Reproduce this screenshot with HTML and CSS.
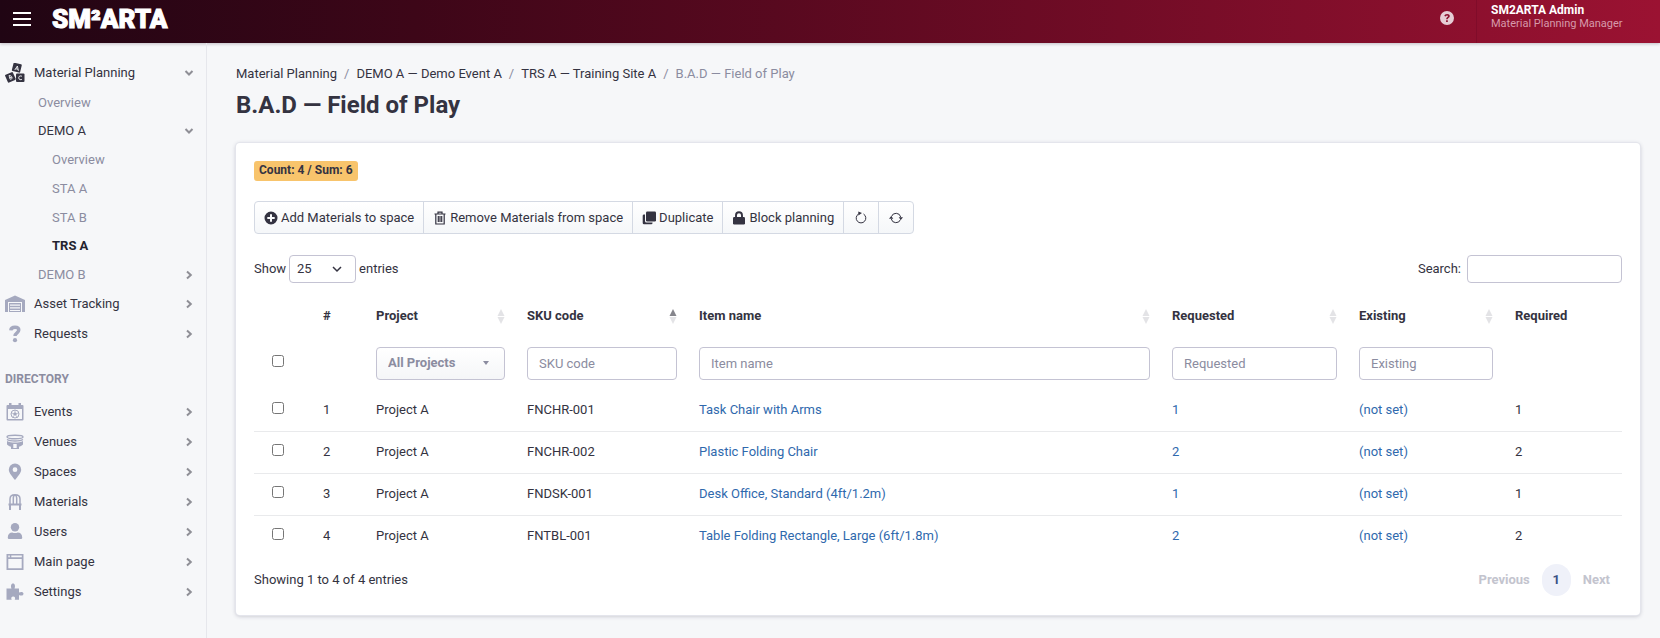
FILE: index.html
```html
<!DOCTYPE html>
<html lang="en">
<head>
<meta charset="utf-8">
<meta name="viewport" content="width=device-width, initial-scale=1">
<title>B.A.D — Field of Play</title>
<link rel="stylesheet" href="styles.css">
</head>
<body>
<svg class="sprite" aria-hidden="true">
  <symbol id="chev-down" viewBox="0 0 10 10"><path d="M1.500 3 5 6.500 8.500 3" fill="none" stroke="currentColor" stroke-width="2"/></symbol>
  <symbol id="chev-right" viewBox="0 0 10 10"><path d="M3 1.500 6.800 5 3 8.500" fill="none" stroke="currentColor" stroke-width="2"/></symbol>
</svg>

<header class="topbar">
  <button class="menu-btn" type="button" aria-label="Toggle menu"><span></span><span></span><span></span></button>
  <a class="logo" href="#">SM²ARTA</a>
  <div class="topbar-right">
    <a class="help" href="#" aria-label="Help">
      <svg viewBox="0 0 14 14"><path fill-rule="evenodd" fill="currentColor" d="M7 0a7 7 0 1 1 0 14A7 7 0 0 1 7 0zM4.300 5.100l1.600.5c.1-.7.500-1.100 1.200-1.100.6 0 .9.300.9.800 0 .9-1.800 1-1.800 2.700v.3h1.500c0-1.200 2.100-1.300 2.100-3.200C9.800 3.700 8.700 2.900 7.200 2.900 5.600 2.900 4.500 3.700 4.300 5.100zM6.100 9.200v1.700h1.700V9.200z"/></svg>
    </a>
    <div class="user"><strong>SM2ARTA Admin</strong><span>Material Planning Manager</span></div>
  </div>
</header>

<div class="shell">
  <nav class="sidebar" aria-label="Main navigation">
    <ul class="nav">
      <li><a class="item" href="#">
        <svg class="ico dark" viewBox="0 0 20 20"><g fill="currentColor"><rect x="7.500" y=".5" width="8.500" height="8.500" rx="1" transform="rotate(14 12 5)"/><rect x="1" y="10" width="8.500" height="8.500" rx="1" transform="rotate(-24 5.500 14)"/><rect x="11" y="10.500" width="8.500" height="8.500" rx="1"/></g><g fill="none" stroke="#f6f7f9" stroke-width=".9"><path d="M9.800 7 12.400 3 13.400 7.800M10.800 5.700l2.300.6"/><path d="M4 12.500l1.200 3.800 1.600-.6c1-.5.500-1.800-.9-1.300.9-.6.500-1.900-.5-1.600zM4.600 14.800l1.300-.4"/><path d="M17 13.400c-.9-.9-3.300-.7-3.300 1.400s2.400 2.300 3.300 1.400"/></g></svg>
        <span>Material Planning</span><svg class="chev"><use href="#chev-down"/></svg></a>
        <ul class="sub">
          <li><a class="item" href="#"><span>Overview</span></a></li>
          <li><a class="item open" href="#"><span>DEMO A</span><svg class="chev"><use href="#chev-down"/></svg></a>
            <ul class="sub sub-2">
              <li><a class="item" href="#"><span>Overview</span></a></li>
              <li><a class="item" href="#"><span>STA A</span></a></li>
              <li><a class="item" href="#"><span>STA B</span></a></li>
              <li><a class="item current" href="#" aria-current="page"><span>TRS A</span></a></li>
            </ul>
          </li>
          <li><a class="item" href="#"><span>DEMO B</span><svg class="chev"><use href="#chev-right"/></svg></a></li>
        </ul>
      </li>
      <li><a class="item" href="#">
        <svg class="ico" viewBox="0 0 20 20"><path fill="currentColor" fill-rule="evenodd" d="M0 18V6L10 1.500 20 6v12h-3V8H3v10zM4 9h12v9H4zM5 10.500v1.200h10v-1.200zM5 13.200v1.200h10v-1.200zM5 15.900v1.100h10v-1.100z"/></svg>
        <span>Asset Tracking</span><svg class="chev"><use href="#chev-right"/></svg></a></li>
      <li><a class="item" href="#">
        <svg class="ico" viewBox="0 0 20 20"><path d="M5.800 6.300C6 3.800 8 3.200 10 3.200c2.200 0 3.800 1 3.800 2.900 0 2.800-3.800 2.700-3.800 6" fill="none" stroke="currentColor" stroke-width="3.400"/><circle cx="10" cy="16.200" r="2.100" fill="currentColor"/></svg>
        <span>Requests</span><svg class="chev"><use href="#chev-right"/></svg></a></li>
    </ul>
    <h2 class="nav-title">Directory</h2>
    <ul class="nav">
      <li><a class="item" href="#">
        <svg class="ico" viewBox="0 0 20 20"><path fill="currentColor" fill-rule="evenodd" d="M4 1h2.500v2h7V1H16v2h1.500q1 0 1 1v13.500q0 1-1 1h-15q-1 0-1-1V4q0-1 1-1H4zM3 7v10h14V7z"/><circle cx="10" cy="12" r="4" fill="none" stroke="currentColor"/><path d="M10 10l2 1.400-.8 2.200H8.800L8 11.400z" fill="currentColor"/><path d="M10 8v2M12 11.400l2-.6M11.200 13.600l1 2M8.800 13.600l-1 2M8 11.400l-2-.6" stroke="currentColor" stroke-width=".7"/></svg>
        <span>Events</span><svg class="chev"><use href="#chev-right"/></svg></a></li>
      <li><a class="item" href="#">
        <svg class="ico" viewBox="0 0 20 20"><g fill="none" stroke="currentColor"><ellipse cx="10" cy="5" rx="8" ry="1.700" stroke-width="1.400"/><path d="M2 7.500c3 2 13 2 16 0" stroke-width="1.300"/></g><path fill="currentColor" fill-rule="evenodd" d="M2 9c4 2 12 2 16 0v3.500c-1 1.300-3 2-4 2.200V17H6v-2.300c-1-.2-3-.9-4-2.200zM8.300 12v4h3.400v-4z"/></svg>
        <span>Venues</span><svg class="chev"><use href="#chev-right"/></svg></a></li>
      <li><a class="item" href="#">
        <svg class="ico" viewBox="0 0 20 20"><path fill="currentColor" fill-rule="evenodd" d="M10 1.500a6.200 6.200 0 0 1 6.200 6.200c0 3.300-4 7.300-6.200 10.300-2.200-3-6.200-7-6.200-10.300A6.200 6.200 0 0 1 10 1.500zM10 5.300a2.400 2.400 0 1 0 0 4.800 2.400 2.400 0 0 0 0-4.800z"/></svg>
        <span>Spaces</span><svg class="chev"><use href="#chev-right"/></svg></a></li>
      <li><a class="item" href="#">
        <svg class="ico" viewBox="0 0 20 20"><path d="M5 12V7c0-2.600 2-4.200 5-4.200S15 4.400 15 7v5M8.300 12V6M11.700 12V6M8.300 6c0-1.500.5-2.700 1.700-3 1.200.3 1.700 1.500 1.700 3" fill="none" stroke="currentColor" stroke-width="1.500"/><path fill="currentColor" d="M3.500 11.500h13v2h-13zM4 13.500h2V18H4zM14 13.500h2V18h-2z"/></svg>
        <span>Materials</span><svg class="chev"><use href="#chev-right"/></svg></a></li>
      <li><a class="item" href="#">
        <svg class="ico" viewBox="0 0 20 20"><circle cx="10" cy="5.200" r="4.200" fill="currentColor"/><path fill="currentColor" d="M2.800 15.200c0-3 2-4.700 4.500-4.700 1.700.8 3.700.8 5.400 0 2.500 0 4.500 1.700 4.500 4.700v.8q0 1-1.200 1H4q-1.200 0-1.200-1z"/></svg>
        <span>Users</span><svg class="chev"><use href="#chev-right"/></svg></a></li>
      <li><a class="item" href="#">
        <svg class="ico" viewBox="0 0 20 20"><path fill="currentColor" fill-rule="evenodd" d="M1.500 2h17v16h-17zM3.300 3.500v1.800h1.500V3.500zM6.300 3.500v1.800h10.500V3.500zM3.300 7v9.300h13.400V7z"/></svg>
        <span>Main page</span><svg class="chev"><use href="#chev-right"/></svg></a></li>
      <li><a class="item" href="#">
        <svg class="ico" viewBox="0 0 20 20"><path fill="currentColor" d="M1.500 6.500h5c-1-2.200-.5-5 1.500-5s2.500 2.800 1.500 5H14v4c1.800-1 4.500-.8 4.500 1.200S15.800 14 14 13v4.800H9.700c1-1.800.3-3.300-1.500-3.300s-2.500 1.500-1.500 3.300H1.500z"/></svg>
        <span>Settings</span><svg class="chev"><use href="#chev-right"/></svg></a></li>
    </ul>
  </nav>

  <main class="content">
    <nav aria-label="Breadcrumb">
      <ol class="crumbs">
        <li><a href="#">Material Planning</a></li>
        <li><a href="#">DEMO A — Demo Event A</a></li>
        <li><a href="#">TRS A — Training Site A</a></li>
        <li aria-current="page">B.A.D — Field of Play</li>
      </ol>
    </nav>
    <h1>B.A.D — Field of Play</h1>

    <section class="card">
      <span class="badge">Count: 4 / Sum: 6</span>

      <div class="btn-group" role="group" aria-label="Material actions">
        <button type="button"><svg viewBox="0 0 14 14"><path fill="currentColor" fill-rule="evenodd" d="M7 .5a6.500 6.500 0 1 1 0 13 6.500 6.500 0 0 1 0-13zM6 3.300V6H3.300v2H6v2.700h2V8h2.700V6H8V3.300z"/></svg>Add Materials to space</button>
        <button type="button"><svg viewBox="0 0 14 14"><path d="M1.500 3h11M5 3V1.200h4V3M2.800 3v10h8.400V3M5.300 5v6M7 5v6M8.700 5v6" fill="none" stroke="currentColor" stroke-width="1.200"/></svg>Remove Materials from space</button>
        <button type="button"><svg viewBox="0 0 14 14"><rect x="4" y=".5" width="10" height="10" rx="1.200" fill="currentColor"/><path d="M3 3.500H2q-1.300 0-1.300 1.200V12q0 1.300 1.300 1.300h7.300q1.200 0 1.200-1.300v-.5H4.500Q3 11.500 3 10z" fill="currentColor"/></svg>Duplicate</button>
        <button type="button"><svg viewBox="0 0 14 14"><rect x="1" y="6" width="12" height="7.500" rx="1.200" fill="currentColor"/><path d="M4 6.500V4.200a3 3 0 0 1 6 0v2.300" fill="none" stroke="currentColor" stroke-width="1.900"/></svg>Block planning</button>
        <button class="icon-only" type="button" aria-label="Reset"><svg viewBox="0 0 14 14"><path d="M9.500 3A4.800 4.800 0 1 1 4.500 3" fill="none" stroke="currentColor"/><path d="M4.300.5v4L8 2z" fill="currentColor"/></svg></button>
        <button class="icon-only" type="button" aria-label="Refresh"><svg viewBox="0 0 14 14"><path d="M2.500 5.500a4.800 4.800 0 0 1 9.200.5M11.500 8.500a4.800 4.800 0 0 1-9.200-.5" fill="none" stroke="currentColor"/><path d="M9.700 6.300H14L11.800 9zM0 7.700h4.300L2.200 5z" fill="currentColor"/></svg></button>
      </div>

      <div class="table-tools">
        <label class="length">Show
          <span class="select"><select><option>25</option><option>50</option><option>100</option></select>
          <svg viewBox="0 0 12 12"><path d="M2 4l4 4 4-4" fill="none" stroke="currentColor" stroke-width="1.500"/></svg></span>
          entries</label>
        <label class="search">Search:<input type="search"></label>
      </div>

      <table>
        <colgroup><col class="c-check"><col class="c-num"><col class="c-project"><col class="c-sku"><col><col class="c-requested"><col class="c-existing"><col class="c-required"></colgroup>
        <thead>
          <tr class="heads">
            <td></td>
            <th scope="col">#</th>
            <th scope="col"><button type="button">Project<svg viewBox="0 0 8 16"><path d="M4 1 7.500 8H.5z"/><path d="M4 16 .5 9h7z"/></svg></button></th>
            <th scope="col" aria-sort="ascending"><button type="button">SKU code<svg viewBox="0 0 8 16"><path class="active" d="M4 1 7.500 8H.5z"/><path d="M4 16 .5 9h7z"/></svg></button></th>
            <th scope="col"><button type="button">Item name<svg viewBox="0 0 8 16"><path d="M4 1 7.500 8H.5z"/><path d="M4 16 .5 9h7z"/></svg></button></th>
            <th scope="col"><button type="button">Requested<svg viewBox="0 0 8 16"><path d="M4 1 7.500 8H.5z"/><path d="M4 16 .5 9h7z"/></svg></button></th>
            <th scope="col"><button type="button">Existing<svg viewBox="0 0 8 16"><path d="M4 1 7.500 8H.5z"/><path d="M4 16 .5 9h7z"/></svg></button></th>
            <th scope="col">Required</th>
          </tr>
          <tr class="filters">
            <td class="check"><input type="checkbox" aria-label="Select all"></td>
            <td></td>
            <td><span class="select project"><select aria-label="Project"><option>All Projects</option><option>Project A</option></select><svg viewBox="0 0 12 12"><path d="M3 4h6L6 8z" fill="currentColor"/></svg></span></td>
            <td><input type="text" placeholder="SKU code" aria-label="SKU code"></td>
            <td><input type="text" placeholder="Item name" aria-label="Item name"></td>
            <td><input type="text" placeholder="Requested" aria-label="Requested"></td>
            <td><input type="text" placeholder="Existing" aria-label="Existing"></td>
            <td></td>
          </tr>
        </thead>
        <tbody>
          <tr><td class="check"><input type="checkbox" aria-label="Select row 1"></td><td>1</td><td>Project A</td><td>FNCHR-001</td><td><a href="#">Task Chair with Arms</a></td><td><a href="#">1</a></td><td><a href="#">(not set)</a></td><td>1</td></tr>
          <tr><td class="check"><input type="checkbox" aria-label="Select row 2"></td><td>2</td><td>Project A</td><td>FNCHR-002</td><td><a href="#">Plastic Folding Chair</a></td><td><a href="#">2</a></td><td><a href="#">(not set)</a></td><td>2</td></tr>
          <tr><td class="check"><input type="checkbox" aria-label="Select row 3"></td><td>3</td><td>Project A</td><td>FNDSK-001</td><td><a href="#">Desk Office, Standard (4ft/1.2m)</a></td><td><a href="#">1</a></td><td><a href="#">(not set)</a></td><td>1</td></tr>
          <tr><td class="check"><input type="checkbox" aria-label="Select row 4"></td><td>4</td><td>Project A</td><td>FNTBL-001</td><td><a href="#">Table Folding Rectangle, Large (6ft/1.8m)</a></td><td><a href="#">2</a></td><td><a href="#">(not set)</a></td><td>2</td></tr>
        </tbody>
      </table>

      <div class="table-foot">
        <span>Showing 1 to 4 of 4 entries</span>
        <nav class="pager" aria-label="Pagination">
          <button type="button" disabled>Previous</button>
          <button class="page" type="button" aria-current="page">1</button>
          <button type="button" disabled>Next</button>
        </nav>
      </div>
    </section>
  </main>
</div>
</body>
</html>
```
FILE: styles.css
```css
:root {
  --text: #343341;
  --muted: #8b8ca0;
  --line: #c4c3d3;
  --link: #2f69ad;
  --bg: #f6f7f9;
}

* { box-sizing: border-box; }

body {
  margin: 0;
  min-height: 100vh;
  display: flex;
  flex-direction: column;
  background: var(--bg);
  color: var(--text);
  font: 13px/20px Roboto, "Noto Sans", sans-serif;
}

a { color: inherit; text-decoration: none; }
ul, ol { list-style: none; margin: 0; padding: 0; }
button, input, select { font: inherit; color: inherit; }
button { cursor: pointer; }
.sprite { display: none; }

.topbar {
  display: flex;
  align-items: flex-start;
  height: 43px;
  padding: 0 38px 0 13px;
  background: linear-gradient(90deg, #200513, #3d0618 25%, #6b0b24 62%, #9b1232);
  box-shadow: 0 1px 3px rgba(40, 20, 40, .25);
  color: #fff;
}
.menu-btn {
  display: grid;
  gap: 4px;
  width: 18px;
  margin: 12px 21px 0 0;
  padding: 0;
  border: 0;
  background: none;
}
.menu-btn span { height: 2px; background: #fff; }
.logo {
  font-size: 26px;
  font-weight: 900;
  line-height: 38px;
  -webkit-text-stroke: 1px #fff;
}
.topbar-right { display: flex; margin-left: auto; }
.help { padding: 11px 22px 0 0; height: 43px; border-right: 1px solid rgba(90, 0, 30, .25); }
.help svg { display: block; width: 14px; height: 14px; color: #e6cdd5; }
.user {
  display: grid;
  align-content: start;
  width: 145px;
  padding: 3px 0 0 14px;
  line-height: 14px;
  white-space: nowrap;
}
.user strong { font-size: 12px; font-weight: 700; }
.user span { font-size: 11px; color: #d69aaa; }

.shell { display: flex; flex: 1; }

.sidebar {
  flex: 0 0 207px;
  padding: 15px 12px 20px 5px;
  border-right: 1px solid #e6e7ec;
}
.item {
  display: flex;
  align-items: center;
  gap: 9px;
  height: 30px;
}
.item span { flex: 1; }
.ico { width: 20px; height: 20px; color: #a5a9bf; }
.ico.dark { color: var(--text); }
.chev { width: 10px; height: 10px; color: #8f8f96; }
.sub .item { height: 29px; padding-left: 33px; color: var(--muted); }
.sub-2 .item { padding-left: 47px; }
.sub .open { height: 28px; color: var(--text); }
.sub .current { height: 28px; color: #24232f; font-weight: 700; }
.nav-title {
  margin: 20px 0 8px;
  color: var(--muted);
  font-size: 12px;
  font-weight: 700;
  line-height: 20px;
  text-transform: uppercase;
}

.content { flex: 1; min-width: 0; padding: 21px 20px 22px 29px; }
.crumbs { display: flex; flex-wrap: wrap; }
.crumbs li + li::before { content: "/"; padding: 0 7px; color: var(--muted); }
.crumbs [aria-current] { color: var(--muted); }
h1 { margin: 5px 0 22px; font-size: 24px; font-weight: 700; line-height: 32px; }

.card {
  padding: 18px 18px 19px;
  border-radius: 4px;
  background: #fff;
  box-shadow: 0 0 0 1px #e4e5ec, 0 1px 4px rgba(50, 50, 80, .3);
}
.badge {
  display: block;
  width: max-content;
  padding: 0 5px 2px;
  border-radius: 3px;
  background: #f8c46c;
  font-size: 12px;
  font-weight: 700;
  line-height: 18px;
}

.btn-group { display: flex; width: max-content; margin-top: 20px; }
.btn-group button {
  display: flex;
  align-items: center;
  gap: 3px;
  height: 33px;
  margin-left: -1px;
  padding: 0 9px;
  border: 1px solid #d4d9e3;
  background: linear-gradient(#fff, #f5f7f9);
}
.btn-group .icon-only { padding: 0 10px; }
.btn-group button:first-child { margin-left: 0; border-radius: 4px 0 0 4px; }
.btn-group button:last-child { border-radius: 0 4px 4px 0; }
.btn-group svg { width: 14px; height: 14px; }

.table-tools {
  display: flex;
  justify-content: space-between;
  margin: 21px 0 12px;
}
.length, .search { display: flex; align-items: center; gap: 3px; }
.search { gap: 6px; }
.search input { width: 155px; height: 28px; padding: 0 8px; }
input:not([type="checkbox"]), select {
  border: 1px solid var(--line);
  border-radius: 4px;
  background: #fff;
}
.select { display: grid; align-items: center; color: var(--text); }
.select select, .select svg { grid-area: 1 / 1; }
.select select { width: 67px; height: 28px; padding: 0 7px; appearance: none; }
.select svg { justify-self: end; width: 12px; height: 12px; margin-right: 13px; pointer-events: none; }

table { width: 100%; border-collapse: collapse; table-layout: fixed; }
.c-check { width: 58px; }
.c-num { width: 53px; }
.c-project { width: 151px; }
.c-sku { width: 172px; }
.c-requested { width: 187px; }
.c-existing { width: 156px; }
.c-required { width: 118px; }
th, td { height: 42px; padding: 0 11px; text-align: left; }
th { font-weight: 700; }
th button {
  display: flex;
  align-items: center;
  justify-content: space-between;
  width: 100%;
  padding: 0;
  border: 0;
  background: none;
}
th svg { width: 8px; height: 16px; fill: #e3e3e6; }
th .active { fill: #85858c; }
.filters td { height: 52px; }
.filters input[type="text"], .project select { display: block; width: 100%; height: 33px; padding: 0 11px; }
.filters ::placeholder { color: var(--muted); opacity: 1; }
.project { color: var(--muted); }
.project select { background: linear-gradient(#fff, #f5f6f8); font-weight: 700; }
td.check { padding: 0 0 4px 18px; }
.check input { display: block; width: 12px; height: 12px; margin: 0; }
tbody tr + tr { border-top: 1px solid #e9eaec; }
tbody a { color: var(--link); }

.table-foot { display: flex; align-items: center; justify-content: space-between; margin-top: 7px; }
.pager { display: flex; align-items: center; gap: 12px; padding-right: 12px; }
.pager button { padding: 0; border: 0; background: none; font-weight: 700; color: #c3c4ce; }
.pager .page { width: 29px; height: 32px; border-radius: 15px; background: #eff1f9; color: #3b5284; }
```
